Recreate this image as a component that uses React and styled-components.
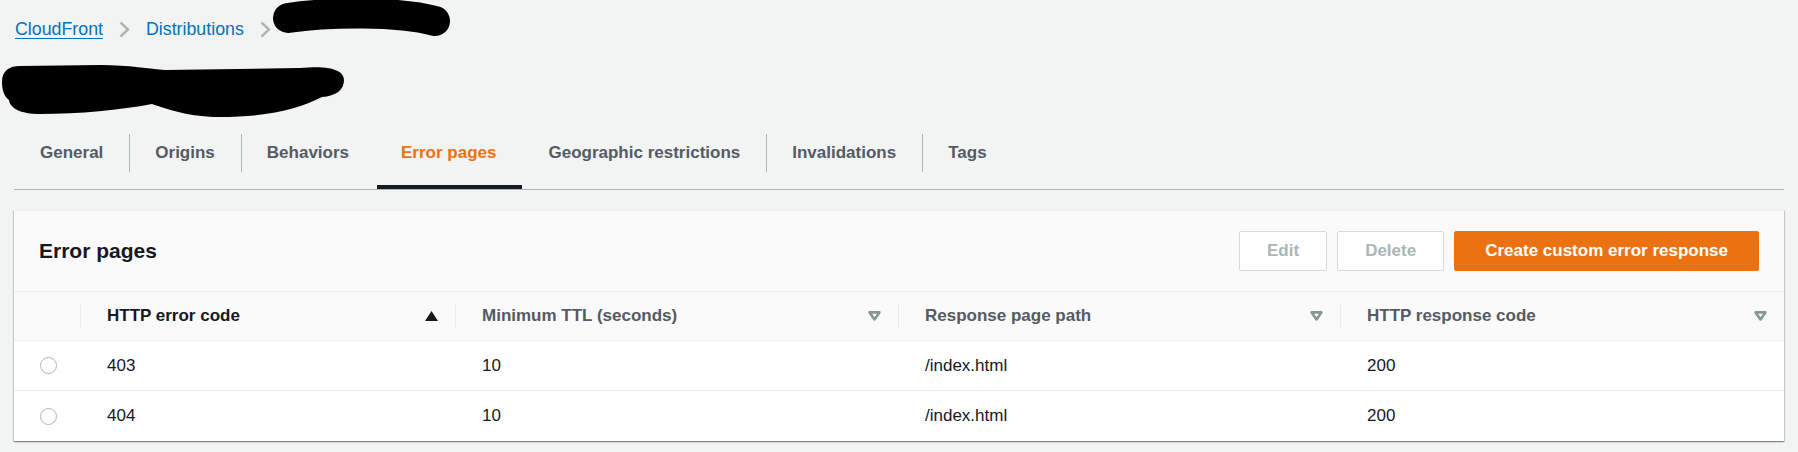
import React from "react";
import styled, { createGlobalStyle } from "styled-components";

const GlobalStyle = createGlobalStyle`
  html, body {
    margin: 0;
    padding: 0;
    background: #f2f3f3;
    font-family: "Liberation Sans", Arial, sans-serif;
    color: #16191f;
  }
  * { box-sizing: border-box; }
`;

const tabs = [
  "General",
  "Origins",
  "Behaviors",
  "Error pages",
  "Geographic restrictions",
  "Invalidations",
  "Tags",
];

const columns = [
  { label: "HTTP error code", sorted: true },
  { label: "Minimum TTL (seconds)" },
  { label: "Response page path" },
  { label: "HTTP response code" },
];

const rows = [
  ["403", "10", "/index.html", "200"],
  ["404", "10", "/index.html", "200"],
];

export default function App() {
  return (
    <Page>
      <GlobalStyle />
      <Breadcrumbs>
        <Crumb $underline>CloudFront</Crumb>
        <Chevron />
        <Crumb>Distributions</Crumb>
        <Chevron />
        <Redacted width="170" height="50" viewBox="0 0 170 50">
          <path
            d="M 7 14 C 47 8, 117 7, 154 17"
            stroke="#000"
            strokeWidth="30"
            strokeLinecap="round"
            fill="none"
          />
        </Redacted>
      </Breadcrumbs>

      <TitleRow>
        <svg width="360" height="76" viewBox="0 0 360 76">
          <path
            d="M 2 32 C 2 20, 10 16, 20 16 L 100 15 C 130 15, 150 19, 165 20 L 300 18 C 330 15, 344 20, 344 30 C 344 40, 336 46, 322 47 C 300 58, 270 67, 220 67 C 190 67, 170 60, 152 54 C 120 60, 80 64, 40 64 C 20 64, 10 58, 9 50 C 4 46, 2 40, 2 32 Z"
            fill="#000"
          />
        </svg>
      </TitleRow>

      <TabList>
        {tabs.map((t) => (
          <Tab key={t} $active={t === "Error pages"}>
            {t}
          </Tab>
        ))}
      </TabList>

      <Card>
        <CardHeader>
          <Heading>Error pages</Heading>
          <Actions>
            <Button disabled>Edit</Button>
            <Button disabled>Delete</Button>
            <Button $primary>Create custom error response</Button>
          </Actions>
        </CardHeader>

        <HeadRow>
          <HeadCell $first />
          {columns.map((c) => (
            <HeadCell key={c.label} $sorted={c.sorted}>
              <span>{c.label}</span>
              {c.sorted ? <SortUp /> : <SortIdle />}
            </HeadCell>
          ))}
        </HeadRow>

        {rows.map((r, i) => (
          <Row key={i} $last={i === rows.length - 1}>
            <Cell $center>
              <Radio />
            </Cell>
            {r.map((v, j) => (
              <Cell key={j}>{v}</Cell>
            ))}
          </Row>
        ))}
      </Card>
    </Page>
  );
}

function Chevron() {
  return (
    <svg width="11" height="17" viewBox="0 0 11 17">
      <polyline
        points="1.5,1.5 9,8.5 1.5,15.5"
        fill="none"
        stroke="#aab7b8"
        strokeWidth="2.4"
      />
    </svg>
  );
}

function SortUp() {
  return (
    <svg width="13" height="10" viewBox="0 0 13 10">
      <polygon points="0,10 6.5,0 13,10" fill="#16191f" />
    </svg>
  );
}

function SortIdle() {
  return (
    <svg width="13" height="10" viewBox="0 0 13 10">
      <polygon
        points="1.6,1.4 11.4,1.4 6.5,8.4"
        fill="none"
        stroke="#879596"
        strokeWidth="2.6"
        strokeLinejoin="round"
      />
    </svg>
  );
}

const Page = styled.div`
  width: 100%;
  min-height: 452px;
  padding-bottom: 12px;
`;

const Breadcrumbs = styled.nav`
  display: flex;
  align-items: center;
  gap: 16px;
  height: 50px;
  padding: 8px 0 0 15px;
  font-size: 17.8px;
`;

const Crumb = styled.a`
  color: #0073bb;
  text-decoration: ${(p) => (p.$underline ? "underline" : "none")};
  text-underline-offset: 3px;
  text-decoration-thickness: 1px;
  line-height: 21px;
`;

const Redacted = styled.svg`
  overflow: visible;
  margin-left: -6px;
`;

const TitleRow = styled.div`
  height: 76px;
  display: flex;
  align-items: flex-start;
`;

const TabList = styled.div`
  display: flex;
  margin: 0 14px;
  border-bottom: 1px solid #aab7b8;
`;

const Tab = styled.div`
  position: relative;
  height: 63px;
  padding: 16px 26px 0;
  font-size: 17px;
  line-height: 21px;
  font-weight: 700;
  color: ${(p) => (p.$active ? "#ec7211" : "#545b64")};
  white-space: nowrap;

  & + &::before {
    content: "";
    position: absolute;
    left: 0;
    top: 8px;
    height: 38px;
    width: 1px;
    background: #aab7b8;
  }

  &::after {
    content: "";
    display: ${(p) => (p.$active ? "block" : "none")};
    position: absolute;
    left: 2px;
    right: 0;
    bottom: 0;
    height: 4px;
    background: #16191f;
  }
`;

const Card = styled.section`
  margin: 20px 14px 0;
  background: #fff;
  border-top: 1px solid #eaeded;
  box-shadow: 0 1px 1px 0 rgba(0, 28, 36, 0.3),
    1px 1px 1px 0 rgba(0, 28, 36, 0.15),
    -1px 1px 1px 0 rgba(0, 28, 36, 0.15);
`;

const CardHeader = styled.div`
  display: flex;
  align-items: center;
  justify-content: space-between;
  padding: 20px 25px;
  background: #fafafa;
  border-bottom: 1px solid #eaeded;
`;

const Heading = styled.h2`
  margin: 0;
  font-size: 21px;
  line-height: 26px;
  font-weight: 700;
  color: #16191f;
`;

const Actions = styled.div`
  display: flex;
  gap: 10px;
`;

const Button = styled.button`
  height: 40px;
  padding: 0 ${(p) => (p.$primary ? "30px" : "27px")};
  border-radius: 2px;
  font-family: inherit;
  font-size: 17px;
  font-weight: 700;
  border: 1px solid ${(p) => (p.$primary ? "#ec7211" : "#d5dbdb")};
  background: ${(p) => (p.$primary ? "#ec7211" : "#fff")};
  color: ${(p) => (p.$primary ? "#fff" : "#aab7b8")};
  cursor: ${(p) => (p.disabled ? "default" : "pointer")};
`;

const grid = `
  display: grid;
  grid-template-columns: 66px 375px 443px 442px 1fr;
`;

const HeadRow = styled.div`
  ${grid}
  height: 49px;
  background: #fafafa;
  border-bottom: 1px solid #eaeded;
`;

const HeadCell = styled.div`
  position: relative;
  display: flex;
  align-items: center;
  justify-content: space-between;
  padding: 0 17px 0 27px;
  font-size: 17px;
  font-weight: 700;
  color: ${(p) => (p.$sorted ? "#16191f" : "#545b64")};

  &::before {
    content: "";
    display: ${(p) => (p.$first ? "none" : "block")};
    position: absolute;
    left: 0;
    top: 12px;
    height: 24px;
    width: 1px;
    background: #eaeded;
  }
`;

const Row = styled.div`
  ${grid}
  height: 50px;
  border-bottom: ${(p) => (p.$last ? "none" : "1px solid #eaeded")};
  font-size: 17px;
  color: #16191f;
`;

const Cell = styled.div`
  display: flex;
  align-items: center;
  justify-content: ${(p) => (p.$center ? "center" : "flex-start")};
  padding: ${(p) => (p.$center ? "0 0 0 2px" : "0 0 0 27px")};
`;

const Radio = styled.span`
  width: 17px;
  height: 17px;
  border-radius: 50%;
  border: 1.5px solid #aab7b8;
  background: #fff;
`;
